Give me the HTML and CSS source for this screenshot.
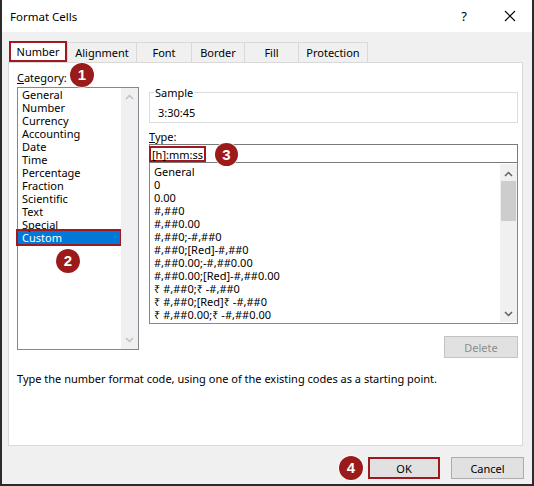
FILE: index.html
```html
<!DOCTYPE html>
<html lang="en">
<head>
    <meta charset="UTF-8">
    <meta name="viewport" content="width=device-width, initial-scale=1.0">
    <title>Format Cells</title>
    <link rel="stylesheet" href="styles.css">
</head>
<body>

    <div class="dialog">
        <div class="titlebar">
            <span class="title">Format Cells</span>
            <span class="help">?</span>
            <span class="close">
                <svg width="12" height="12" viewBox="0 0 12 12">
                    <path d="M1 1 L11 11 M11 1 L1 11" stroke="#000" stroke-width="1.1" fill="none"/>
                </svg>
            </span>
        </div>

        <div class="body">
            <div class="tabs">
                <div class="tab active">Number</div>
                <div class="tab tab-align">Alignment</div>
                <div class="tab tab-font">Font</div>
                <div class="tab tab-border">Border</div>
                <div class="tab tab-fill">Fill</div>
                <div class="tab tab-prot">Protection</div>
            </div>

            <div class="panel">
                <div class="columns">
                    <div class="category">
                        <div class="label"><u>C</u>ategory:</div>
                        <div class="listbox cat-list">
                            <ul class="items">
                                <li>General</li>
                                <li>Number</li>
                                <li>Currency</li>
                                <li>Accounting</li>
                                <li>Date</li>
                                <li>Time</li>
                                <li>Percentage</li>
                                <li>Fraction</li>
                                <li>Scientific</li>
                                <li>Text</li>
                                <li>Special</li>
                                <li class="selected">Custom</li>
                            </ul>
                            <div class="scrollbar disabled">
                                <svg class="arrow" width="9" height="6" viewBox="0 0 9 6"><path d="M1 5 L4.5 1.5 L8 5" stroke="currentColor" stroke-width="1.5" fill="none"/></svg>
                                <svg class="arrow" width="9" height="6" viewBox="0 0 9 6"><path d="M1 1 L4.5 4.5 L8 1" stroke="currentColor" stroke-width="1.5" fill="none"/></svg>
                            </div>
                        </div>
                        <span class="badge badge-1">1</span>
                        <span class="badge badge-2">2</span>
                    </div>

                    <div class="details">
                        <fieldset class="sample">
                            <legend>Sample</legend>
                            <div class="sample-value">3:30:45</div>
                        </fieldset>

                        <div class="label type-label"><u>T</u>ype:</div>
                        <div class="type-input">
                            <span class="type-value">[h]:mm:ss</span>
                            <span class="badge badge-3">3</span>
                        </div>

                        <div class="listbox fmt-list">
                            <ul class="items">
                                <li>General</li>
                                <li>0</li>
                                <li>0.00</li>
                                <li>#,##0</li>
                                <li>#,##0.00</li>
                                <li>#,##0;-#,##0</li>
                                <li>#,##0;[Red]-#,##0</li>
                                <li>#,##0.00;-#,##0.00</li>
                                <li>#,##0.00;[Red]-#,##0.00</li>
                                <li>₹ #,##0;₹ -#,##0</li>
                                <li>₹ #,##0;[Red]₹ -#,##0</li>
                                <li>₹ #,##0.00;₹ -#,##0.00</li>
                            </ul>
                            <div class="scrollbar">
                                <svg class="arrow" width="9" height="6" viewBox="0 0 9 6"><path d="M1 5 L4.5 1.5 L8 5" stroke="currentColor" stroke-width="1.5" fill="none"/></svg>
                                <div class="thumb"></div>
                                <div class="track"></div>
                                <svg class="arrow" width="9" height="6" viewBox="0 0 9 6"><path d="M1 1 L4.5 4.5 L8 1" stroke="currentColor" stroke-width="1.5" fill="none"/></svg>
                            </div>
                        </div>

                        <div class="delete-row">
                            <button class="btn btn-disabled">Delete</button>
                        </div>
                    </div>
                </div>

                <p class="hint">Type the number format code, using one of the existing codes as a starting point.</p>
            </div>

            <div class="footer">
                <span class="badge badge-4">4</span>
                <button class="btn btn-ok">OK</button>
                <button class="btn btn-cancel">Cancel</button>
            </div>
        </div>
    </div>

</body>
</html>
```

FILE: styles.css
```css
body {
    margin: 0;
    font-family: "Noto Sans", "DejaVu Sans", sans-serif;
    font-size: 11px;
    color: #000;
    background: #fff;
}

.dialog {
    width: 534px;
    height: 486px;
    box-sizing: border-box;
    border: 2px solid #2b2b2b;
    border-top: none;
    display: flex;
    flex-direction: column;
}

.titlebar {
    height: 32px;
    background: #fff;
    display: flex;
    align-items: center;
    padding-left: 8px;
    flex-shrink: 0;
}

.title {
    flex: 1;
    font-size: 11.5px;
}

.help {
    width: 20px;
    text-align: center;
    font-size: 13px;
    margin-right: 26px;
}

.close {
    width: 20px;
    display: flex;
    justify-content: center;
    margin-right: 12px;
}

.body {
    flex: 1;
    background: #f0f0f0;
    padding: 10px 9px 0 6px;
    display: flex;
    flex-direction: column;
}

/* tabs */
.tabs {
    display: flex;
    align-items: flex-end;
    height: 20px;
    padding-left: 2px;
}

.tab {
    height: 20px;
    box-sizing: border-box;
    border: 1px solid #d9d9d9;
    border-bottom: none;
    border-left: none;
    display: flex;
    align-items: center;
    justify-content: center;
    background: #f0f0f0;
}

.tab.active {
    width: 58px;
    height: 21px;
    background: #fff;
    border: 2px solid #a0191e;
    margin-left: -1px;
    position: relative;
    z-index: 1;
}

.tab-align { width: 70px; border-left: 1px solid #d9d9d9; }
.tab-font { width: 55px; }
.tab-border { width: 53px; }
.tab-fill { width: 54px; }
.tab-prot { width: 69px; }

.panel {
    height: 384px;
    box-sizing: border-box;
    background: #fff;
    border: 1px solid #d9d9d9;
    padding: 7px 0 0 8px;
}

.columns {
    display: flex;
    gap: 10px;
}

.label {
    height: 15px;
    line-height: 15px;
}

/* list boxes */
.category {
    width: 122px;
    position: relative;
}

.listbox {
    display: flex;
    box-sizing: border-box;
    border: 1px solid #828790;
    background: #fff;
}

.cat-list {
    height: 263px;
    margin-top: 2px;
}

.items {
    list-style: none;
    margin: 0;
    padding: 0;
    flex: 1;
}

.items li {
    height: 13px;
    line-height: 13px;
    padding-left: 4px;
    white-space: nowrap;
}

.items li.selected {
    background: #0078d7;
    color: #fff;
    outline: 2px solid #a0191e;
    margin-right: 1px;
}

.scrollbar {
    width: 17px;
    background: #f0f0f0;
    display: flex;
    flex-direction: column;
    align-items: center;
    justify-content: space-between;
    color: #606060;
}

.scrollbar.disabled {
    color: #c0c0c0;
}

.arrow {
    margin: 6px 0;
    flex-shrink: 0;
}

.thumb {
    width: 15px;
    height: 40px;
    background: #cdcdcd;
    margin-top: -1px;
}

.track {
    flex: 1;
}

/* right side */
.details {
    width: 369px;
    position: relative;
}

.sample {
    margin: 15px 0 0;
    padding: 5px 8px 2px;
    border: 1px solid #dcdcdc;
}

.sample legend {
    padding: 0 1px;
    margin-left: -4px;
    line-height: 15px;
}

.sample-value {
    height: 15px;
    line-height: 15px;
}

.type-label {
    margin-top: 6px;
}

.type-input {
    height: 19px;
    box-sizing: border-box;
    border: 1px solid #7a7a7a;
    display: flex;
    align-items: center;
    position: relative;
}

.type-value {
    display: inline-block;
    height: 16px;
    line-height: 13px;
    padding: 0 1px;
    margin-left: -1px;
    border: 2px solid #a0191e;
    box-sizing: border-box;
}

.fmt-list {
    height: 161px;
    border-top: none;
}

.fmt-list .items {
    padding-top: 2px;
}

.fmt-list .scrollbar {
    margin: 1px 0 1px;
}

.fmt-list .arrow {
    margin: 7px 0 5px;
}

.delete-row {
    display: flex;
    justify-content: flex-end;
    margin-top: 12px;
}

.btn {
    font-family: inherit;
    font-size: 11px;
    height: 22px;
    box-sizing: border-box;
    background: #e1e1e1;
    border: 1px solid #adadad;
    padding: 0;
    color: #000;
}

.btn-disabled {
    width: 74px;
    color: #8d8d8d;
    border-color: #c3c3c3;
}

.hint {
    margin: 13px 0 0;
    line-height: 15px;
}

/* footer */
.footer {
    display: flex;
    justify-content: flex-end;
    gap: 11px;
    margin-top: 11px;
    margin-right: -1px;
    position: relative;
}

.btn-ok {
    width: 72px;
    border: 2px solid #a0191e;
}

.btn-cancel {
    width: 73px;
}

/* numbered markers */
.badge {
    position: absolute;
    width: 24px;
    height: 24px;
    border-radius: 50%;
    background: #9b1b1b;
    box-shadow: 0 0 0 1px rgba(255, 255, 255, 0.7);
    color: #fff;
    font-family: "Liberation Sans", Arial, sans-serif;
    font-weight: bold;
    font-size: 15px;
    line-height: 24px;
    text-align: center;
    z-index: 2;
}

.badge-1 { left: 53px; top: -7px; }
.badge-2 { left: 39px; top: 179px; }
.badge-3 { left: 65px; top: -2px; width: 23px; height: 23px; line-height: 23px; }
.badge-4 { right: 161px; top: -1px; }
```
